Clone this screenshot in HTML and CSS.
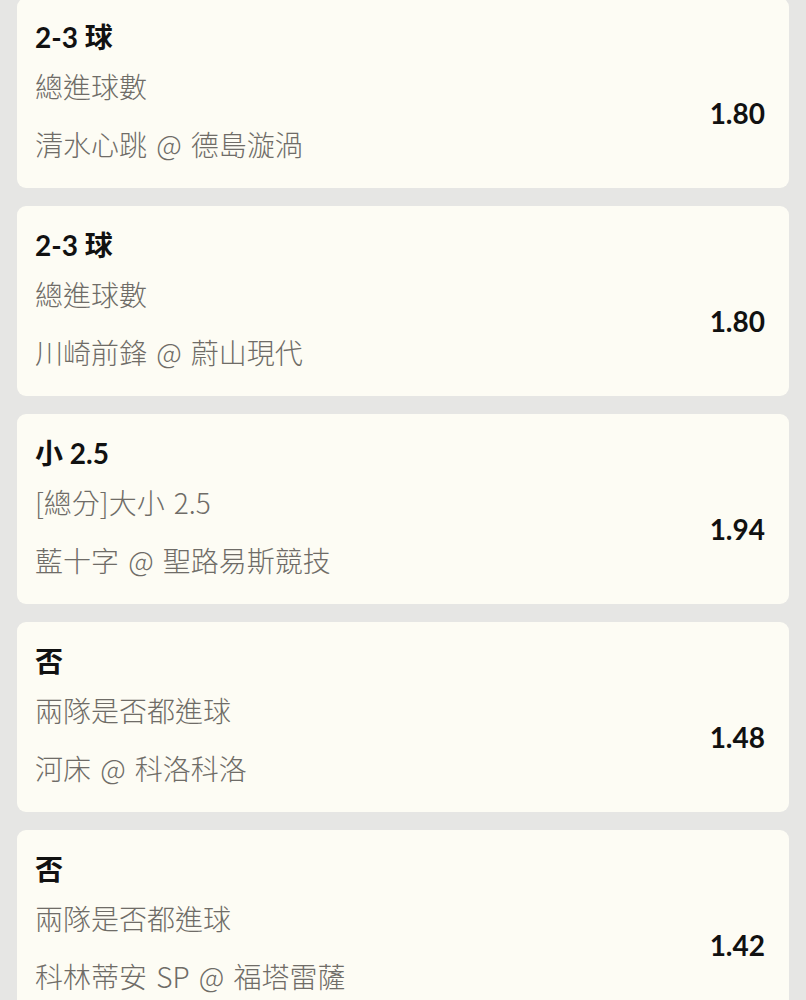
FILE: index.html
```html
<!DOCTYPE html>
<html lang="zh-Hant">
<head>
<meta charset="utf-8">
<link rel="stylesheet" href="styles.css">
</head>
<body>
<div class="list">
  <div class="card">
    <div class="title">2-3 球</div>
    <div class="body">
      <div class="info">
        <div class="line">總進球數</div>
        <div class="line">清水心跳 @ 德島漩渦</div>
      </div>
      <div class="odds">1.80</div>
    </div>
  </div>
  <div class="card">
    <div class="title">2-3 球</div>
    <div class="body">
      <div class="info">
        <div class="line">總進球數</div>
        <div class="line">川崎前鋒 @ 蔚山現代</div>
      </div>
      <div class="odds">1.80</div>
    </div>
  </div>
  <div class="card">
    <div class="title">小 2.5</div>
    <div class="body">
      <div class="info">
        <div class="line">[總分]大小 2.5</div>
        <div class="line">藍十字 @ 聖路易斯競技</div>
      </div>
      <div class="odds">1.94</div>
    </div>
  </div>
  <div class="card">
    <div class="title">否</div>
    <div class="body">
      <div class="info">
        <div class="line">兩隊是否都進球</div>
        <div class="line">河床 @ 科洛科洛</div>
      </div>
      <div class="odds">1.48</div>
    </div>
  </div>
  <div class="card">
    <div class="title">否</div>
    <div class="body">
      <div class="info">
        <div class="line">兩隊是否都進球</div>
        <div class="line">科林蒂安 SP @ 福塔雷薩</div>
      </div>
      <div class="odds">1.42</div>
    </div>
  </div>
</div>
</body>
</html>
```
FILE: styles.css
```css
html, body {
  margin: 0;
  padding: 0;
  background: #e6e6e4;
}
body {
  font-family: Lato, "Noto Sans CJK TC", sans-serif;
  overflow: hidden;
}
.list {
  display: flex;
  flex-direction: column;
  gap: 18px;
  padding: 0 17px;
  margin-top: -2px;
}
.card {
  background: #fdfcf4;
  border-radius: 9px;
  padding: 21px 24px 24px 18px;
  height: 190px;
  box-sizing: border-box;
}
.title {
  font-family: Lato, "Noto Sans CJK TC", sans-serif;
  font-weight: 700;
  font-size: 28px;
  line-height: 36px;
  color: #111;
}
.body {
  display: flex;
  align-items: center;
  justify-content: space-between;
  margin-top: 11px;
}
.info {
  display: flex;
  flex-direction: column;
  gap: 18px;
}
.line {
  font-family: "Noto Sans CJK TC", sans-serif;
  font-size: 28px;
  line-height: 40px;
  color: #6f6c67;
  font-weight: 300;
  word-spacing: 3px;
}
.odds {
  font-family: Lato, sans-serif;
  font-weight: 700;
  font-size: 28px;
  color: #111;
  margin-bottom: 4px;
}
```
